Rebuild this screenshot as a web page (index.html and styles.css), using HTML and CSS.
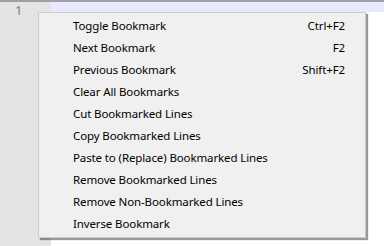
FILE: index.html
```html
<!DOCTYPE html>
<html>
  <head>
    <meta charset="utf-8">
    <title>Bookmark menu</title>
    <link rel="stylesheet" href="styles.css">
  </head>
  <body>
    <div class="editor">
      <div class="gutter"><span class="lineno">1</span></div>
      <div class="textarea">
        <div class="line current"></div>
      </div>
    </div>

    <ul class="menu">
      <li><span class="label">Toggle Bookmark</span><span class="key">Ctrl+F2</span></li>
      <li><span class="label">Next Bookmark</span><span class="key">F2</span></li>
      <li><span class="label">Previous Bookmark</span><span class="key">Shift+F2</span></li>
      <li><span class="label">Clear All Bookmarks</span></li>
      <li><span class="label">Cut Bookmarked Lines</span></li>
      <li><span class="label">Copy Bookmarked Lines</span></li>
      <li><span class="label">Paste to (Replace) Bookmarked Lines</span></li>
      <li><span class="label">Remove Bookmarked Lines</span></li>
      <li><span class="label">Remove Non-Bookmarked Lines</span></li>
      <li><span class="label">Inverse Bookmark</span></li>
    </ul>
  </body>
</html>
```

FILE: styles.css
```css
html, body { margin: 0; padding: 0; background-color: white; }
body { width: 384px; height: 246px; overflow: hidden; position: relative;
       font-family: "Noto Sans", "Open Sans", sans-serif; font-size: 11.5px; color: black; }

.editor { display: flex; height: 246px; border-top: 2px solid #a0a0a0; box-sizing: border-box; }
.gutter { width: 51px; background-color: #e4e4e4; }
.lineno { display: block; padding: 0 0 0 15px; font-family: "Noto Sans", sans-serif;
          font-size: 13px; line-height: 16px; color: #808080; }
.textarea { flex: 1; }
.line.current { height: 10px; background-color: #e8e8ff; }

/* popup menu sits over the editor */
.menu { position: absolute; left: 38px; top: 12px; width: 326px; margin: 0; padding: 1px 0 3px 0;
        list-style: none; background-color: #f0f0f0; border: 1px solid #cccccc;
        box-shadow: 2px 2px 1px rgba(0, 0, 0, .4); letter-spacing: -0.12px; }
.menu li { display: flex; height: 22px; align-items: center; padding: 0 20px 0 34px; }
.menu .label { flex: 1; }
.menu .key { text-align: right; }
```
